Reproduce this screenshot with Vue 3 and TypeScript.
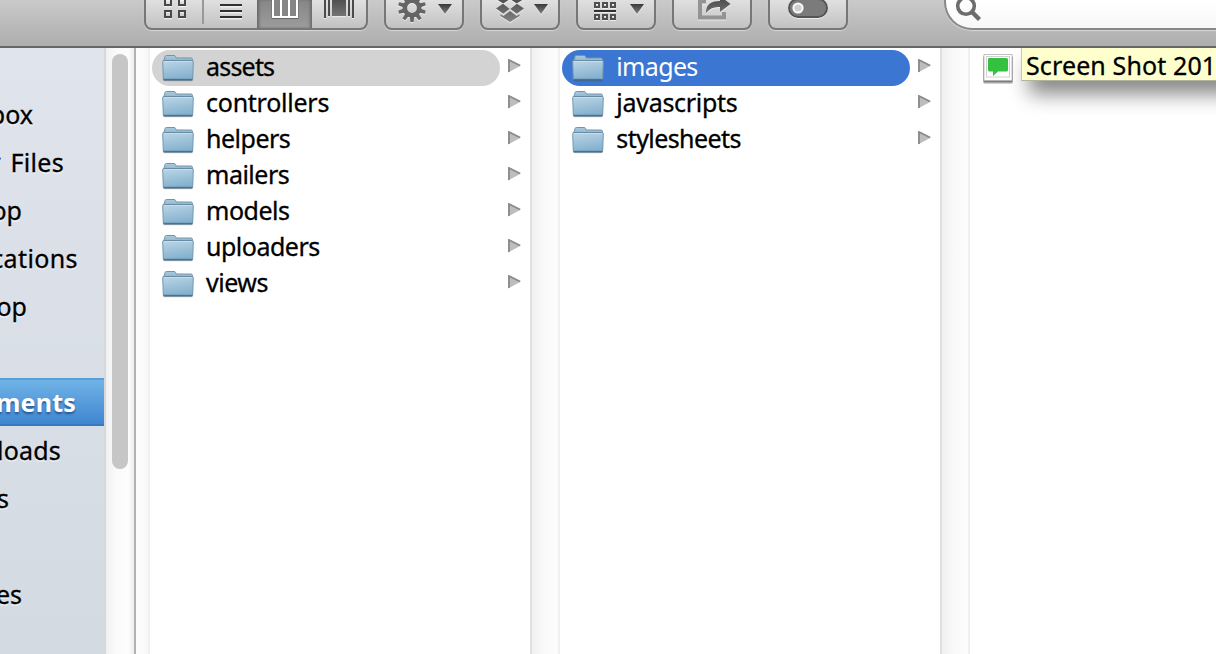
<script setup lang="ts">
interface Entry {
  name: string
  spacing: number
  selected?: boolean
}

interface SidebarEntry extends Entry {
  right: number
}

const sidebar: SidebarEntry[] = [
  { name: 'box', right: 33, spacing: 0 },
  { name: 'y Files', right: 64, spacing: 0.3 },
  { name: 'op', right: 22, spacing: 0 },
  { name: 'cations', right: 78, spacing: 0.4 },
  { name: 'op', right: 27, spacing: 0 },
  { name: '', right: 0, spacing: 0 },
  { name: 'ments', right: 76, spacing: 0.2, selected: true },
  { name: 'loads', right: 61, spacing: 0.2 },
  { name: 's', right: 9, spacing: 0 },
  { name: '', right: 0, spacing: 0 },
  { name: 'es', right: 22, spacing: 0 },
]

const columns: { active: boolean; entries: Entry[] }[] = [
  {
    active: false,
    entries: [
      { name: 'assets', spacing: -0.8, selected: true },
      { name: 'controllers', spacing: -0.25 },
      { name: 'helpers', spacing: -0.5 },
      { name: 'mailers', spacing: -0.5 },
      { name: 'models', spacing: -0.5 },
      { name: 'uploaders', spacing: -0.5 },
      { name: 'views', spacing: -0.5 },
    ],
  },
  {
    active: true,
    entries: [
      { name: 'images', spacing: -0.65, selected: true },
      { name: 'javascripts', spacing: -0.28 },
      { name: 'stylesheets', spacing: -0.58 },
    ],
  },
]

const teeth = [0, 36, 72, 108, 144, 180, 216, 252, 288, 324]
</script>

<template>
  <div class="window">
    <svg class="defs" width="0" height="0" aria-hidden="true">
      <defs>
        <linearGradient id="folderFront" x1="0" y1="0" x2="0.25" y2="1">
          <stop offset="0" stop-color="#bdd6e6" />
          <stop offset="1" stop-color="#84b1ce" />
        </linearGradient>
        <linearGradient id="folderBack" x1="0" y1="0" x2="0" y2="1">
          <stop offset="0" stop-color="#abcbdd" />
          <stop offset="1" stop-color="#86adc5" />
        </linearGradient>
        <linearGradient id="ink" gradientUnits="userSpaceOnUse" x1="0" y1="0" x2="0" y2="22">
          <stop offset="0" stop-color="#505050" />
          <stop offset="1" stop-color="#828282" />
        </linearGradient>
        <linearGradient id="caret" x1="0" y1="0" x2="0" y2="1">
          <stop offset="0" stop-color="#393939" />
          <stop offset="1" stop-color="#808080" />
        </linearGradient>
      </defs>
    </svg>

    <header class="toolbar">
      <div class="button views">
        <div class="segment first">
          <svg width="57" height="28" viewBox="146 0 57 28">
            <g fill="none" stroke="#fff" stroke-opacity="0.6" stroke-width="2" transform="translate(0 1.3)">
              <path d="M165-1h6v6h-6zM179-1h6v6h-6zM165 11h6v6h-6zM179 11h6v6h-6z" />
            </g>
            <path d="M165-1h6v6h-6zM179-1h6v6h-6zM165 11h6v6h-6zM179 11h6v6h-6z" fill="none" stroke="#484848" stroke-width="2" />
          </svg>
        </div>
        <div class="segment second">
          <svg width="54" height="28" viewBox="203 0 54 28">
            <path d="M220 6.700h22M220 12.700h22M220 18.700h22" stroke="#eee" stroke-width="1.500" />
            <path d="M220 5h22M220 11h22M220 17h22" stroke="#303030" stroke-width="2" />
          </svg>
        </div>
        <div class="segment pressed">
          <svg width="55" height="28" viewBox="257 0 55 28">
            <path d="M272-2h26v20.500h-26z" fill="#858585" stroke="#666" stroke-width="1" />
            <path d="M273-2v19h24v-19M281-2v18M289-2v18" fill="none" stroke="#fff" stroke-width="2" />
          </svg>
        </div>
        <div class="segment last">
          <svg width="54" height="28" viewBox="312 0 54 28">
            <path d="M325 0v19M329 0v17M349 0v17M353 0v19" stroke="#eee" stroke-width="2" opacity=".8" />
            <path d="M325 0v18M329 0v16M349 0v16M353 0v18" stroke="#4a4a4a" stroke-width="2" />
            <path d="M332 0h14v16h-14z" fill="url(#ink)" />
            <path d="M332 16.700h14" stroke="#eee" />
          </svg>
        </div>
      </div>

      <div class="button">
        <svg width="76" height="28" viewBox="386 0 76 28">
          <g class="engraved">
            <g transform="translate(412 8)">
              <path v-for="angle in teeth" :key="angle" d="M-1.600-14h3.200l.6 6h-4.400z" :transform="`rotate(${angle})`" fill="#646464" />
              <circle r="7.200" fill="none" stroke="#646464" stroke-width="4.600" />
            </g>
          </g>
          <path class="engraved" d="M438 4h14l-7 10z" fill="url(#caret)" />
        </svg>
      </div>

      <div class="button">
        <svg width="76" height="28" viewBox="482 0 76 28">
          <g class="engraved" fill="url(#ink)">
            <path d="M496 8.500l7-4.800 6.700 5.300-6.500 4.800z" />
            <path d="M524 8.500l-7-4.800-6.700 5.300 6.500 4.800z" />
            <path d="M496-1l8-4 6 4-6.700 4.500zM524-1l-8-4-6 4 6.700 4.500z" />
            <path d="M500.500 14.300l3 1.600 6.500-4.900 6.500 4.900 3-1.600V16L510 22l-9.500-6z" />
          </g>
          <path class="engraved" d="M534 4h14l-7 10z" fill="url(#caret)" />
        </svg>
      </div>

      <div class="button">
        <svg width="76" height="28" viewBox="578 0 76 28">
          <g class="engraved">
            <path d="M595 3h4v4h-4zM603 3h4v4h-4zM611 3h4v4h-4zM595 15h4v4h-4zM603 15h4v4h-4zM611 15h4v4h-4z" fill="none" stroke="#505050" stroke-width="2" />
            <path d="M594 11h22" stroke="#303030" stroke-width="2" />
          </g>
          <path class="engraved" d="M630 4h14l-7 10z" fill="url(#caret)" />
        </svg>
      </div>

      <div class="button">
        <svg width="76" height="28" viewBox="674 0 76 28">
          <path class="engraved" d="M706 1.500h-6v16h24V12" fill="none" stroke="#949494" stroke-width="4" />
          <path class="engraved" d="M706 13c0-8 4-12 14-12v-5l10.500 8L720 12V7c-6-.5-10.500 1.500-14 6z" fill="url(#ink)" />
        </svg>
      </div>

      <div class="button">
        <svg width="76" height="28" viewBox="770 0 76 28">
          <rect class="engraved" x="789" y="-1" width="38" height="18" rx="9" fill="#7b7b7b" stroke="#555" stroke-width="2" />
          <circle cx="798" cy="8" r="4.600" fill="#cfcfcf" stroke="#fafafa" stroke-width="2" />
        </svg>
      </div>

      <div class="search">
        <svg width="60" height="28" viewBox="946 0 60 28">
          <circle cx="966" cy="6" r="8.300" fill="none" stroke="#6d6d6d" stroke-width="3.600" />
          <path d="M972 12l7.500 7.500" stroke="#6d6d6d" stroke-width="4.400" />
        </svg>
      </div>
    </header>

    <main class="browser">
      <nav class="sidebar">
        <div v-for="(item, index) in sidebar" :key="index" class="place" :class="{ current: item.selected }">
          <span class="place-name" :style="{ width: `${item.right}px`, letterSpacing: `${item.spacing}px` }">{{ item.name }}</span>
        </div>
      </nav>
      <div class="sidebar-scroll"><div class="thumb"></div></div>
      <div class="gutter lead"></div>

      <template v-for="(column, c) in columns" :key="c">
        <section class="column" :class="{ active: column.active }">
          <div v-for="entry in column.entries" :key="entry.name" class="row">
            <div class="pill" :class="{ selected: entry.selected }">
              <svg class="folder" width="32" height="28" viewBox="0 0 32 28">
                <path d="M1.500 9V6.500q0-1 1-1.200L3 2.500Q3.300 1.500 4.500 1.500h7.500q1.200 0 1.700 1.200l.6 1.300H29q1.500 0 1.500 1.500V9z" fill="url(#folderBack)" stroke="#7295aa" />
                <path d="M.7 7.500q0-1 1-1h28.600q1 0 1 1L30.700 25q0 1-1 1H2.300q-1 0-1-1z" fill="url(#folderFront)" stroke="#7097b1" />
                <path d="M1.500 6.500h29" stroke="#688ca4" />
                <path d="M2 7.500h28" stroke="#c9deeb" />
                <path d="M1.500 25.500h29" stroke="#487293" stroke-width="1.400" />
                <path d="M1.500 26.700h29" stroke="#000" stroke-opacity=".25" />
              </svg>
              <span class="name" :style="{ letterSpacing: `${entry.spacing}px` }">{{ entry.name }}</span>
            </div>
            <svg class="arrow" width="14" height="14" viewBox="0 0 14 14">
              <path d="M0 0l13 6.500L0 13.500z" fill="#bdbdbd" />
              <path d="M1 13V1l11 5.500" fill="none" stroke="#8a8a8a" stroke-width="1.800" />
            </svg>
          </div>
        </section>
        <div class="gutter"></div>
      </template>

      <section class="column files">
        <div class="file">
          <svg class="thumbnail" width="32" height="34" viewBox="0 0 32 34">
            <rect x="1" y="4" width="30" height="28" rx="2" fill="#000" opacity=".18" />
            <rect x="1.500" y="4" width="29" height="26.500" rx="1" fill="#444" opacity=".6" />
            <rect x="2" y="2.500" width="28" height="26" fill="#fff" stroke="#b4b4b4" stroke-width=".8" />
            <rect x="4.500" y="4.500" width="23" height="20.500" fill="#fff" stroke="#d2d2d2" />
            <path d="M7 6h17.500q1.500 0 1.500 1.500V18q0 1.500-1.500 1.500H16L11 24v-4.500H7.500Q6 19.500 6 18V7q0-1 1-1z" fill="#34c142" />
          </svg>
          <div class="tooltip">Screen Shot 2013</div>
        </div>
      </section>
    </main>
  </div>
</template>

<style>
body {
  margin: 0;
  overflow: hidden;
}
</style>

<style scoped>
.window {
  width: 1216px;
  height: 654px;
  overflow: hidden;
  display: flex;
  flex-direction: column;
  background: #fff;
  color: #000;
  font-family: "Noto Sans", "Open Sans", sans-serif;
  font-size: 25px;
  -webkit-text-stroke: 0.3px currentColor;
}
.defs {
  position: absolute;
}
svg {
  display: block;
  flex: none;
}
.toolbar {
  box-sizing: border-box;
  height: 48px;
  flex: none;
  display: flex;
  gap: 16px;
  padding-left: 144px;
  border-bottom: 2px solid #666;
  background: linear-gradient(#cacaca, #adadad);
}
.button,
.search {
  box-sizing: border-box;
  width: 80px;
  height: 30px;
  border: 2px solid #777;
  border-top: 0;
  border-radius: 0 0 8px 8px;
  background: linear-gradient(#e0e0e0, #c2c2c2);
  box-shadow: 0 1px 1px rgba(255, 255, 255, 0.45);
  flex: none;
  overflow: hidden;
}
.views {
  width: 224px;
  display: flex;
}
.segment {
  height: 28px;
}
.first {
  width: 57px;
  position: relative;
}
.first::after {
  content: "";
  position: absolute;
  right: -1px;
  top: 0;
  width: 2px;
  height: 24px;
  background: #999;
}
.second {
  width: 54px;
}
.pressed {
  width: 55px;
  background: linear-gradient(#868686, #9c9c9c);
  box-shadow: inset 3px 0 3px -1px #686868, inset -3px 0 3px -1px #6b6b6b;
}
.last {
  width: 54px;
}
.engraved {
  filter: drop-shadow(0 1px 0.4px rgba(255, 255, 255, 0.6));
}
.search {
  width: 300px;
  margin-left: 80px;
  border-color: #888;
  border-radius: 0 0 0 28px;
  background: linear-gradient(#fff, #f8f8f8);
}
.browser {
  flex: 1;
  display: flex;
  min-height: 0;
}
.sidebar {
  box-sizing: border-box;
  width: 106px;
  flex: none;
  padding-top: 42px;
  border-right: 2px solid #d5d8dd;
  background: linear-gradient(#e0e4ec, #d3dae2);
}
.place {
  height: 48px;
  display: flex;
  align-items: center;
  overflow: hidden;
}
.place-name {
  display: flex;
  justify-content: flex-end;
  white-space: pre;
  word-spacing: 3px;
  line-height: 48px;
  text-shadow: 0 2px 0 rgba(255, 255, 255, 0.45);
}
.current {
  box-sizing: border-box;
  border-top: 2px solid #579fdc;
  border-bottom: 2px solid #3579c1;
  background: linear-gradient(#70b3e7, #3e86d0);
  color: #fff;
  font-weight: 700;
  -webkit-text-stroke: 0;
}
.current .place-name {
  text-shadow: 0 2px 2px rgba(20, 50, 100, 0.6);
}
.sidebar-scroll {
  box-sizing: border-box;
  width: 30px;
  flex: none;
  padding: 6px 0 0 6px;
  border-right: 2px solid #b2b2b2;
  background: linear-gradient(90deg, #f1f1f1, #fafafa 35%, #fdfdfd 80%, #eee);
}
.thumb {
  width: 16px;
  height: 415px;
  border-radius: 8px;
  background: #c6c6c6;
}
.gutter {
  box-sizing: border-box;
  width: 30px;
  flex: none;
  border-left: 2px solid #e0e0e0;
  border-right: 2px solid #f0f0f0;
  background: linear-gradient(90deg, #f0f0f0, #fafafa 50%, #fcfcfc);
}
.lead {
  width: 14px;
  border-left: 0;
  background: linear-gradient(90deg, #fdfdfd, #f8f8f8);
}
.column {
  box-sizing: border-box;
  width: 380px;
  flex: none;
  padding: 2px 0 0 2px;
}
.row {
  height: 36px;
  display: flex;
}
.pill {
  box-sizing: border-box;
  width: 348px;
  height: 36px;
  padding: 4px 0 0 10px;
  display: flex;
  gap: 12px;
  border-radius: 18px;
}
.name {
  line-height: 24px;
  white-space: nowrap;
}
.active .name {
  margin-left: 0.3px;
}
.pill.selected {
  background: #d3d3d3;
}
.active .pill.selected {
  background: #3b76d3;
  color: #fff;
  -webkit-text-stroke: 0;
}
.arrow {
  margin: 9px 0 0 8px;
}
.files {
  width: 246px;
  padding: 0 0 0 12px;
}
.file {
  display: flex;
}
.thumbnail {
  margin-top: 4px;
}
.tooltip {
  box-sizing: border-box;
  width: 220px;
  height: 33px;
  margin-left: 7px;
  padding-left: 4px;
  flex: none;
  line-height: 34px;
  letter-spacing: 0.12px;
  border-left: 1px solid #c8c8b0;
  border-bottom: 1px solid #b4b49c;
  background: #ffffcd;
  white-space: nowrap;
  box-shadow: 8px 13px 20px rgba(0, 0, 0, 0.48);
  clip-path: inset(0 0 -60px -30px);
}
</style>
